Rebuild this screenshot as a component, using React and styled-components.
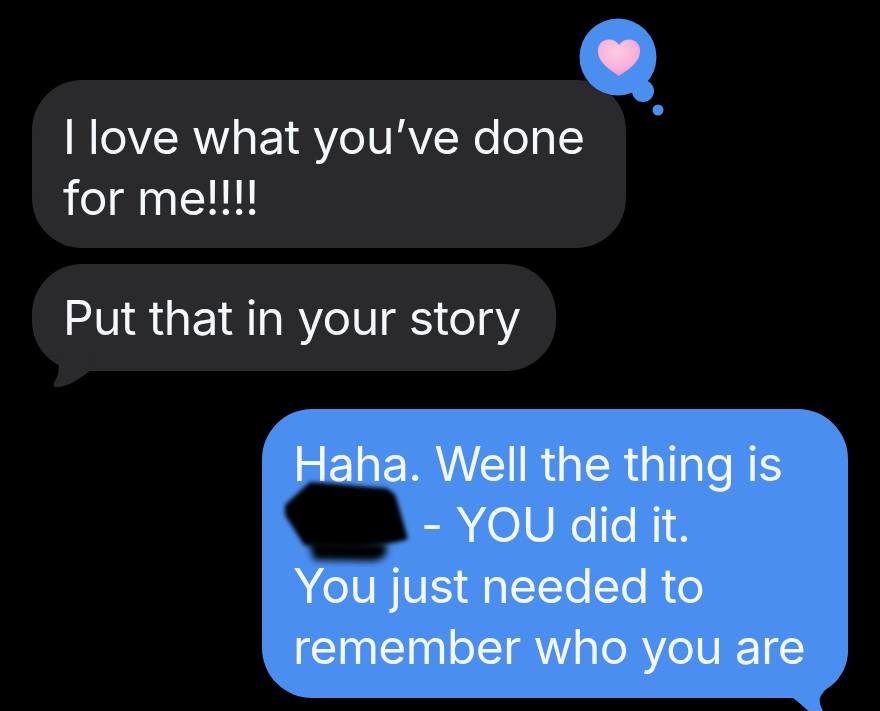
import React from 'react';
import styled, { createGlobalStyle } from 'styled-components';

const GlobalStyle = createGlobalStyle`
  html, body {
    margin: 0;
    background: #000;
    overflow: hidden;
  }
`;

const Thread = styled.div`
  box-sizing: border-box;
  width: 880px;
  height: 711px;
  overflow: hidden;
  padding: 80px 32px 0;
  display: flex;
  flex-direction: column;
  background: #000;
  font-family: Inter, "Liberation Sans", sans-serif;
  filter: blur(0.5px);
`;

const Bubble = styled.div`
  position: relative;
  box-sizing: border-box;
  width: ${(props) => props.width}px;
  margin-top: ${(props) => props.gap || 0}px;
  align-self: ${(props) => (props.mine ? 'flex-end' : 'flex-start')};
  padding: ${(props) => props.padding};
  border-radius: ${(props) => props.radius || 50}px;
  background: ${(props) => (props.mine ? '#4a8ef0' : '#2a2a2c')};
  color: #f4f7fb;
  font-size: 48px;
  line-height: 61px;
  letter-spacing: -0.65px;
  white-space: nowrap;
`;

// sits above the tail, which reaches up behind the last line
const Line = styled.div`
  position: relative;
  margin-left: -1px;
  padding-left: ${(props) => props.indent || 0}px;
`;

const Tail = styled.svg`
  position: absolute;
  display: block;
  ${(props) => (props.mine ? 'right: 0; bottom: -24px;' : 'left: 18px; bottom: -18px;')}
`;

const Reaction = styled.svg`
  position: absolute;
  right: -42px;
  top: -62px;
`;

const Redaction = styled.svg`
  position: absolute;
  left: 16px;
  top: 62px;
  overflow: visible;
`;

const IncomingTail = () => (
  <Tail width="50" height="36" viewBox="0 0 50 36">
    <path d="M6 0 C9 8 10 16 7 24 C4 30 1 34 7 34 C18 34 30 26 42 16 L44 0 Z" fill="#2a2a2c" />
  </Tail>
);

const OutgoingTail = () => (
  <Tail mine width="70" height="82" viewBox="0 0 70 82">
    <path d="M70 0 L70 10 C70 20 67 28 64 33 C60 39 58 42 54 45 C50 48 46 50 45 53 C42 56 41 60 42 62 C42 66 44 68 45 71 L48 82 C36 78 26 66 15 58 L0 58 L0 0 Z" fill="#4a8ef0" />
  </Tail>
);

const ReactionBadge = () => (
  <Reaction width="90" height="100" viewBox="0 0 90 100">
    <defs>
      <radialGradient id="heartFill" cx="0.45" cy="0.35" r="0.75">
        <stop offset="0" stopColor="#fbcde4" />
        <stop offset="0.6" stopColor="#f9b0d9" />
        <stop offset="1" stopColor="#f685c2" />
      </radialGradient>
    </defs>
    <circle cx="40" cy="39" r="38.5" fill="#4a8ef0" />
    <circle cx="65" cy="73" r="11" fill="#4a8ef0" />
    <circle cx="80" cy="92" r="5.5" fill="#4a8ef0" />
    <path
      d="M41 58 C34 53 21.500 46 20 35 C19 26.500 24.500 21.500 31 21.500 C35.500 21.500 39 23.500 41 27 C43 23.500 46.500 21.500 51 21.500 C57.500 21.500 63 26.500 62 35 C60.500 46 48 53 41 58 Z"
      fill="url(#heartFill)"
    />
  </Reaction>
);

const RedactionBlob = () => (
  <Redaction width="140" height="100" viewBox="0 0 140 100">
    <defs>
      <filter id="smudge" x="-20%" y="-20%" width="140%" height="140%">
        <feGaussianBlur stdDeviation="2" />
      </filter>
      <filter id="smudgeSoft" x="-20%" y="-30%" width="140%" height="160%">
        <feGaussianBlur stdDeviation="3.5" />
      </filter>
    </defs>
    <path d="M30 70 L106 72 C112 80 108 88 96 90 L36 89 Z" fill="#000" filter="url(#smudgeSoft)" />
    <path
      d="M7 34 L32 11 C56 12 84 16 107 17 C113 19 116 22 118 26 L130 68 C120 72 100 75 70 76 L26 74 L7 44 Z"
      fill="#000"
      filter="url(#smudge)"
    />
  </Redaction>
);

const App = () => (
  <>
    <GlobalStyle />
    <Thread>
      <Bubble width={594} padding="26px 32px 20px">
        <ReactionBadge />
        <Line>I love what you’ve done</Line>
        <Line>for me!!!!</Line>
      </Bubble>
      <Bubble width={524} gap={16} padding="23px 32px">
        <IncomingTail />
        <Line>Put that in your story</Line>
      </Bubble>
      <Bubble mine width={586} gap={38} padding="24px 32px 21px">
        <OutgoingTail />
        <Line>Haha. Well the thing is</Line>
        <Line indent={128}>- YOU did it.</Line>
        <Line>You just needed to</Line>
        <Line>remember who you are</Line>
        <RedactionBlob />
      </Bubble>
    </Thread>
  </>
);

export default App;
